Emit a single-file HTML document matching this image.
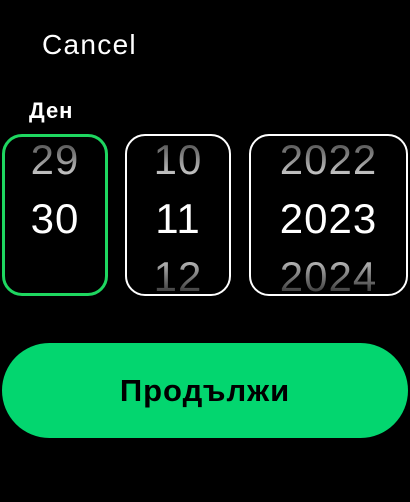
<!DOCTYPE html>
<html><head><meta charset="utf-8"><style>
body{margin:0;width:410px;height:502px;background:#000;overflow:hidden;font-family:"Liberation Sans",sans-serif;position:relative}
.abs{position:absolute}
.box{position:absolute;top:134px;height:162px;box-sizing:border-box;border:2px solid #fff;border-radius:20px;overflow:hidden}
.n{position:absolute;left:0;right:0;text-align:center;font-size:42px;line-height:40px;color:#fff;letter-spacing:1px}
.f1{top:4px;background:linear-gradient(#4a4a4a,#d8d8d8);-webkit-background-clip:text;color:transparent}
.f2{top:63px}
.f3{top:121px;background:linear-gradient(#c8c8c8,#2a2a2a);-webkit-background-clip:text;color:transparent}
</style></head><body>
<div class="abs" style="left:42px;top:29px;font-size:28px;letter-spacing:1.3px;color:#fff">Cancel</div>
<div class="abs" style="left:29px;top:98px;font-size:22px;letter-spacing:1px;font-weight:bold;color:#fff">Ден</div>
<div class="box" style="left:2px;width:106px;border:3px solid #1ed760"><div class="n f1" style="top:3px">29</div><div class="n f2" style="top:62px">30</div></div>
<div class="box" style="left:125px;width:106px"><div class="n f1">10</div><div class="n f2">11</div><div class="n f3">12</div></div>
<div class="box" style="left:249px;width:159px"><div class="n f1">2022</div><div class="n f2">2023</div><div class="n f3">2024</div></div>
<div class="abs" style="left:2px;top:343px;width:406px;height:95px;border-radius:48px;background:#03d66f;text-align:center;line-height:95px;font-size:31px;letter-spacing:1px;font-weight:bold;color:#000">Продължи</div>
</body></html>
